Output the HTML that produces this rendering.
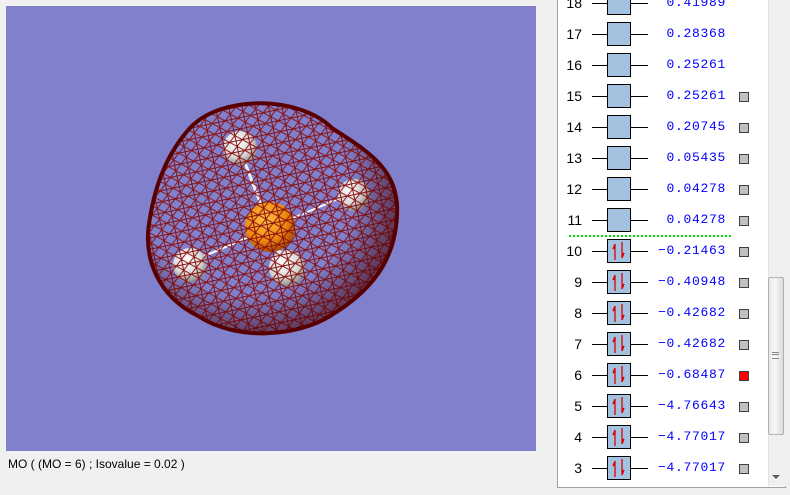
<!DOCTYPE html>
<html><head><meta charset="utf-8"><style>
body{margin:0;width:790px;height:495px;background:#f0f0f0;position:relative;overflow:hidden;font-family:"Liberation Sans",sans-serif}
#view{position:absolute;left:6px;top:6px;width:530px;height:445px;background:#8080cc}
#cap{position:absolute;left:8px;top:457px;font-size:12px;color:#000}
#panel{position:absolute;left:557px;top:-2px;width:227px;height:488px;background:#fff;border:1px solid #a0a0a0;overflow:hidden}
#sb{position:absolute;left:768px;top:0;width:17px;height:486px;background:#f0f0f0;border-left:1px solid #e4e4e4}
#thumb{position:absolute;left:768px;top:277px;width:16px;height:158px;background:linear-gradient(90deg,#e8e8e8,#f8f8f8 40%,#dcdcdc);border:1px solid #b0b0b0;border-radius:2px;box-sizing:border-box}
.r{position:absolute;left:0;width:227px;height:26px}
.n{position:absolute;right:203px;top:5px;font-size:14px;color:#000}
.l{position:absolute;top:13px;height:1px;background:#000}
.b{position:absolute;left:49px;top:1px;width:24px;height:24px;background:#a3c2e0;border:1px solid #000;box-sizing:border-box}
.v{position:absolute;right:59px;top:5px;font-family:"Liberation Mono",monospace;font-size:13px;letter-spacing:0.7px;color:#0000ff}
.c{position:absolute;left:181px;top:9px;width:10px;height:10px;background:#c0c0c0;border:1px solid #404040;box-sizing:border-box}
</style></head><body>
<div id="view">
<svg width="530" height="445" viewBox="6 6 530 445" xmlns="http://www.w3.org/2000/svg">
<defs>
<pattern id="m" width="13" height="11" patternUnits="userSpaceOnUse" patternTransform="rotate(-12)">
<path d="M0 0H13M0 11H13M0 0L13 11M13 0L0 11M6.5 0V11" stroke="#8a1010" stroke-width="1" fill="none"/>
</pattern>
<radialGradient id="sh" cx="0.4" cy="0.4" r="0.65"><stop offset="0.6" stop-color="#400000" stop-opacity="0"/><stop offset="1" stop-color="#500000" stop-opacity="0.9"/></radialGradient>
<radialGradient id="h" cx="0.4" cy="0.35" r="0.7"><stop offset="0" stop-color="#fff"/><stop offset="0.6" stop-color="#d8d8d8"/><stop offset="1" stop-color="#808080"/></radialGradient>
<radialGradient id="p" cx="0.4" cy="0.35" r="0.7"><stop offset="0" stop-color="#ffc040"/><stop offset="0.6" stop-color="#f08a10"/><stop offset="1" stop-color="#a04800"/></radialGradient>
<clipPath id="cl"><path d="M190,128 C222,94 300,96 332,128 C365,150 400,168 397,215 C395,262 370,292 330,316 C298,336 238,342 198,316 C158,296 142,258 150,218 C156,180 170,150 190,128 Z"/></clipPath>
</defs>
<line x1="240" y1="150" x2="270" y2="228" stroke="#eee" stroke-width="3"/>
<line x1="352" y1="193" x2="188" y2="263" stroke="#fff" stroke-width="2"/>
<line x1="270" y1="228" x2="285" y2="268" stroke="#eee" stroke-width="4"/>
<circle cx="240" cy="148" r="17" fill="url(#h)"/>
<circle cx="354" cy="195" r="16" fill="url(#h)"/>
<circle cx="190" cy="265" r="17" fill="url(#h)"/>
<circle cx="287" cy="268" r="18" fill="url(#h)"/>
<circle cx="270" cy="227" r="25" fill="url(#p)"/>
<rect x="100" y="50" width="350" height="340" fill="url(#m)" clip-path="url(#cl)"/>
<rect x="140" y="90" width="270" height="260" fill="url(#sh)" clip-path="url(#cl)"/>
<path d="M190,128 C222,94 300,96 332,128 C365,150 400,168 397,215 C395,262 370,292 330,316 C298,336 238,342 198,316 C158,296 142,258 150,218 C156,180 170,150 190,128 Z" fill="none" stroke="#580000" stroke-width="4"/>
</svg>
</div>
<div id="cap">MO ( (MO = 6) ; Isovalue = 0.02 )</div>
<div id="panel">
<div style="position:absolute;left:11px;top:236px;width:162px;border-top:2px dotted #00dd00"></div>
</div>
<div id="sb"></div><div id="thumb"></div>
<div style="position:absolute;left:772px;top:475px;width:0;height:0;border-left:4px solid transparent;border-right:4px solid transparent;border-top:4px solid #606060"></div>
<div style="position:absolute;left:772px;top:352px;width:7px;height:5px;border-top:1px solid #888;border-bottom:1px solid #888"></div>
<div style="position:absolute;left:772px;top:354px;width:7px;height:1px;background:#888"></div>
<script>
const d=[[18,"0.41989",0],[17,"0.28368",0],[16,"0.25261",0],[15,"0.25261",1],[14,"0.20745",1],[13,"0.05435",1],[12,"0.04278",1],[11,"0.04278",1],[10,"\u22120.21463",1],[9,"\u22120.40948",1],[8,"\u22120.42682",1],[7,"\u22120.42682",1],[6,"\u22120.68487",2],[5,"\u22124.76643",1],[4,"\u22124.77017",1],[3,"\u22124.77017",1]];
const p=document.getElementById('panel');
d.forEach((r,i)=>{const y=2+i*31-13+2;const occ=r[0]<=10;
let s=`<div class="r" style="top:${y}px"><span class="n">${r[0]}</span><div class="l" style="left:34px;width:16px"></div><div class="b">${occ?'<svg width="22" height="22" style="position:absolute;left:0;top:0"><path d="M7 20V4M7 4L5 9L7 7" stroke="#e00000" stroke-width="1.3" fill="none"/><path d="M14 2V18M14 18L16 13L14 15" stroke="#e00000" stroke-width="1.3" fill="none"/></svg>':''}</div><div class="l" style="left:73px;width:17px"></div><span class="v">${r[1]}</span>${r[2]?`<div class="c" style="${r[2]==2?'background:#ff0000':''}"></div>`:''}</div>`;
p.insertAdjacentHTML('beforeend',s);});
</script>
</body></html>
